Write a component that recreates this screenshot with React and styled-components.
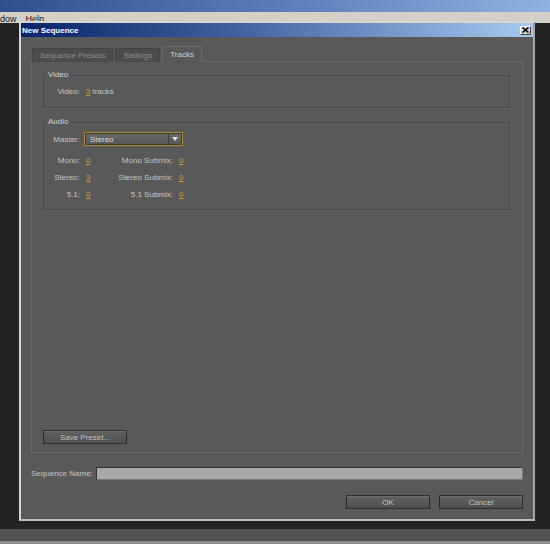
import React from 'react'
import styled, { createGlobalStyle } from 'styled-components'

const GlobalStyle = createGlobalStyle`
  body {
    margin: 0;
    font-family: 'Liberation Sans', Arial, sans-serif;
    font-size: 8px;
  }
`

const App = () => {
  return (
    <Page>
      <GlobalStyle />
      <TopBar />
      <MenuBar>
        <MenuItem>dow</MenuItem>
        <MenuItem>Help</MenuItem>
      </MenuBar>
      <Workspace>
        <Dialog>
          <TitleBar>
            <TitleText>New Sequence</TitleText>
            <CloseButton>
              <svg width='7' height='6' viewBox='0 0 7 6'>
                <path d='M0.5 0.5 L6.5 5.5 M6.5 0.5 L0.5 5.5' stroke='#000' strokeWidth='1.6' />
              </svg>
            </CloseButton>
          </TitleBar>
          <Body>
            <Tabs>
              <Tab>Sequence Presets</Tab>
              <Tab>Settings</Tab>
              <Tab $active>Tracks</Tab>
            </Tabs>
            <Panel>
              <Group>
                <Legend>Video</Legend>
                <Row $top='6px'>
                  <Label>Video:</Label>
                  <Value>3</Value>
                  <Plain>tracks</Plain>
                </Row>
              </Group>
              <Group $audio>
                <Legend>Audio</Legend>
                <Row $top='5px'>
                  <Label>Master:</Label>
                  <Select>
                    <SelectText>Stereo</SelectText>
                    <SelectArrow>
                      <svg width='6' height='4' viewBox='0 0 6 4'>
                        <path d='M0 0 L6 0 L3 4 Z' fill='#e8e8e8' />
                      </svg>
                    </SelectArrow>
                  </Select>
                </Row>
                <TrackGrid>
                  <Label>Mono:</Label>
                  <Value>0</Value>
                  <Label>Mono Submix:</Label>
                  <Value>0</Value>
                  <Label>Stereo:</Label>
                  <Value>3</Value>
                  <Label>Stereo Submix:</Label>
                  <Value>0</Value>
                  <Label>5.1:</Label>
                  <Value>0</Value>
                  <Label>5.1 Submix:</Label>
                  <Value>0</Value>
                </TrackGrid>
              </Group>
              <Spacer />
              <Button $width='84px'>Save Preset...</Button>
            </Panel>
            <NameRow>
              <NameLabel>Sequence Name:</NameLabel>
              <NameInput />
            </NameRow>
            <ButtonRow>
              <Button $width='84px'>OK</Button>
              <Button $width='84px'>Cancel</Button>
            </ButtonRow>
          </Body>
        </Dialog>
      </Workspace>
      <Strip />
      <Footer />
    </Page>
  )
}

const Page = styled.div`
  width: 550px;
  height: 544px;
  overflow: hidden;
  background: #232323;
  display: flex;
  flex-direction: column;
`

const TopBar = styled.div`
  height: 12px;
  flex-shrink: 0;
  background: linear-gradient(to right, #2f4f90, #5f80bd 55%, #8fb2e0);
`

const MenuBar = styled.div`
  height: 11px;
  flex-shrink: 0;
  background: #d4d0c8;
  display: flex;
  gap: 9px;
  overflow: hidden;
`

const MenuItem = styled.span`
  font-size: 9px;
  line-height: 14px;
  color: #111;
`

const Workspace = styled.div`
  flex: 1;
  padding: 0 0 8px 19px;
  display: flex;
`

const Dialog = styled.div`
  width: 516px;
  height: 500px;
  margin-top: -2px;
  box-sizing: border-box;
  border: 2px solid #d8d6d2;
  border-right-color: #a6a6a6;
  border-bottom-color: #bdbbb7;
  background: #595959;
  display: flex;
  flex-direction: column;
  position: relative;
  z-index: 1;
`

const TitleBar = styled.div`
  height: 14px;
  flex-shrink: 0;
  background: linear-gradient(to right, #0a246a, #3c5e9e 40%, #a6caf0);
  display: flex;
  align-items: center;
  justify-content: space-between;
  padding: 0 2px 0 1px;
`

const TitleText = styled.span`
  color: #fff;
  font-weight: bold;
  font-size: 8px;
`

const CloseButton = styled.div`
  width: 11px;
  height: 9px;
  box-sizing: border-box;
  background: #d4d0c8;
  border: 1px solid;
  border-color: #fff #404040 #404040 #fff;
  display: flex;
  align-items: center;
  justify-content: center;
`

const Body = styled.div`
  flex: 1;
  display: flex;
  flex-direction: column;
  padding: 9px 10px 10px 10px;
`

const Tabs = styled.div`
  display: flex;
  align-items: flex-end;
  gap: 2px;
  padding-left: 1px;
  position: relative;
  z-index: 2;
  margin-bottom: -1px;
`

const Tab = styled.div`
  height: ${(p) => (p.$active ? '16px' : '14px')};
  box-sizing: border-box;
  padding: 0 7px;
  display: flex;
  align-items: center;
  border: 1px solid ${(p) => (p.$active ? '#6c6c6c' : '#444')};
  border-bottom: none;
  background: ${(p) => (p.$active ? '#595959' : '#4c4c4c')};
  color: ${(p) => (p.$active ? '#d2d2d2' : '#8c8c8c')};
`

const Panel = styled.div`
  flex: 1;
  border: 1px solid #6a6a6a;
  padding: 8px 12px 8px 11px;
  display: flex;
  flex-direction: column;
`

const Group = styled.fieldset`
  margin: ${(p) => (p.$audio ? '9px 0 0' : '0')};
  padding: 0 0 ${(p) => (p.$audio ? '9px' : '10px')} 9px;
  min-width: 0;
  border: 1px solid #474747;
  box-shadow: 1px 1px 0 #626262;
  display: flex;
  flex-direction: column;
`

const Legend = styled.legend`
  color: #d6d6d6;
  line-height: 10px;
  padding: 0 2px;
  margin-left: -7px;
`

const Row = styled.div`
  display: flex;
  align-items: center;
  gap: 6px;
  margin-top: ${(p) => p.$top};
  line-height: 11px;
`

const Label = styled.span`
  color: #c6c6c6;
  text-align: right;
  min-width: 27px;
`

const Value = styled.span`
  color: #d09a3a;
  text-decoration: underline;
  text-underline-offset: 1px;
`

const Plain = styled.span`
  color: #c6c6c6;
  margin-left: -4px;
`

const Select = styled.div`
  width: 99px;
  height: 14px;
  box-sizing: border-box;
  margin-left: -2px;
  border: 1px solid #b8892c;
  background: linear-gradient(#6a6a6a, #575757);
  box-shadow: inset 0 0 0 1px #3a3a3a;
  display: flex;
  align-items: center;
`

const SelectText = styled.span`
  flex: 1;
  color: #dcdcdc;
  padding-left: 5px;
`

const SelectArrow = styled.span`
  width: 12px;
  height: 10px;
  border-left: 1px solid #3e3e3e;
  display: flex;
  align-items: center;
  justify-content: center;
  margin-right: 1px;
`

const TrackGrid = styled.div`
  display: grid;
  grid-template-columns: 27px 12px 69px 12px;
  column-gap: 6px;
  row-gap: 6px;
  margin-top: 9px;
  line-height: 11px;
`

const Spacer = styled.div`
  flex: 1;
`

const Button = styled.div`
  width: ${(p) => p.$width};
  height: 14px;
  box-sizing: border-box;
  border: 1px solid #2e2e2e;
  background: linear-gradient(#626262, #4f4f4f);
  box-shadow: inset 0 1px 0 #6e6e6e;
  color: #c4c4c4;
  display: flex;
  align-items: center;
  justify-content: center;
`

const NameRow = styled.div`
  display: flex;
  align-items: center;
  gap: 3px;
  margin-top: 14px;
`

const NameLabel = styled.span`
  color: #c6c6c6;
`

const NameInput = styled.div`
  flex: 1;
  height: 13px;
  box-sizing: border-box;
  background: #a8a8a8;
  border: 1px solid #333;
  border-right-color: #777;
  border-bottom-color: #777;
`

const ButtonRow = styled.div`
  display: flex;
  justify-content: flex-end;
  gap: 9px;
  margin-top: 15px;
`

const Strip = styled.div`
  height: 12px;
  flex-shrink: 0;
  background: #525252;
`

const Footer = styled.div`
  height: 3px;
  flex-shrink: 0;
  background: #8e8e8e;
`

export default App
